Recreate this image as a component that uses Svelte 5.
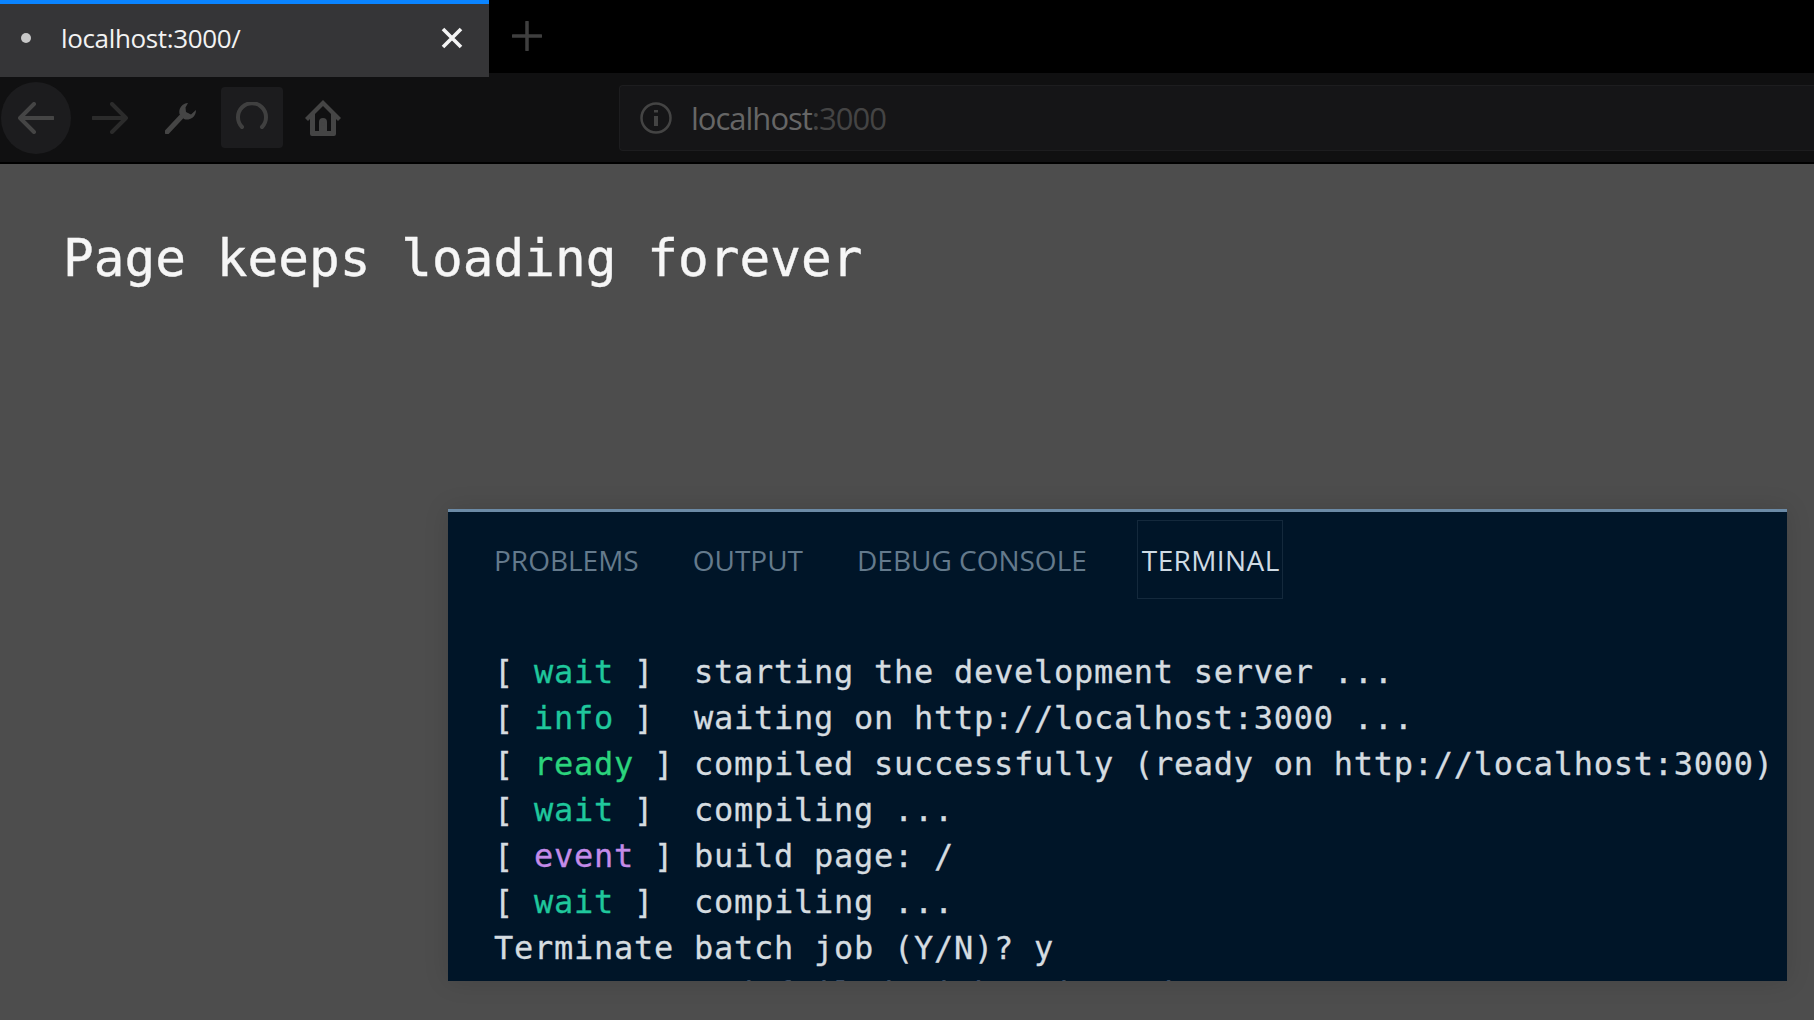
<script lang="ts">
  type Line = { tag?: string; kind?: string; pad?: string; text: string };

  const panelTabs = ["PROBLEMS", "OUTPUT", "DEBUG CONSOLE", "TERMINAL"];

  const lines: Line[] = [
    { tag: "wait", kind: "wait", pad: "  ", text: "starting the development server ..." },
    { tag: "info", kind: "wait", pad: "  ", text: "waiting on http://localhost:3000 ..." },
    { tag: "ready", kind: "ready", pad: " ", text: "compiled successfully (ready on http://localhost:3000)" },
    { tag: "wait", kind: "wait", pad: "  ", text: "compiling ..." },
    { tag: "event", kind: "event", pad: " ", text: "build page: /" },
    { tag: "wait", kind: "wait", pad: "  ", text: "compiling ..." },
    { text: "Terminate batch job (Y/N)? y" },
    { text: "error Command failed with exit code 3221225786." }
  ];
</script>

<div class="window">
  <header class="tabstrip">
    <div class="tab">
      <span class="dot"></span>
      <span class="tabtitle">localhost:3000/</span>
      <svg class="close" viewBox="0 0 22 22" width="22" height="22" aria-hidden="true">
        <path d="M2 2 L20 20 M20 2 L2 20" />
      </svg>
    </div>
    <svg class="newtab" viewBox="0 0 30 30" width="30" height="30" aria-hidden="true">
      <path d="M15 1 V29 M1 15 H29" />
    </svg>
  </header>

  <nav class="toolbar">
    <div class="btn back">
      <svg viewBox="0 0 36 32" width="36" height="32" aria-hidden="true">
        <path d="M35 16 H2 M16 2 L2 16 L16 30" />
      </svg>
    </div>
    <div class="btn forward">
      <svg viewBox="0 0 36 32" width="36" height="32" aria-hidden="true">
        <path d="M1 16 H34 M20 2 L34 16 L20 30" />
      </svg>
    </div>
    <div class="btn wrench">
      <svg viewBox="0 0 32 32" width="32" height="32" aria-hidden="true">
        <path class="wrench-handle" d="M2 30 L17 14" />
        <path class="wrench-head" d="M23 1 A9 9 0 0 0 14.500 12 L19 17 A9 9 0 0 0 31 8 L26 12.500 L21 10 L20.500 5.500 Z" />
      </svg>
    </div>
    <div class="btn reload">
      <svg viewBox="0 0 32 32" width="32" height="32" aria-hidden="true">
        <path d="M6 25 A14 14 0 1 1 26 25" />
      </svg>
    </div>
    <div class="btn home">
      <svg viewBox="0 0 36 36" width="36" height="36" aria-hidden="true">
        <path class="house" fill-rule="evenodd" d="M18 0 L36 18 L33 21 L31 19 V34 Q31 36 29 36 H7 Q5 36 5 34 V19 L3 21 L0 18 Z M18 6 L10 14 V31 H14 V22 Q14 18 18 18 Q22 18 22 22 V31 H26 V14 Z" />
        <circle class="house" cx="18" cy="24" r="2" />
      </svg>
    </div>
    <div class="address">
      <svg class="info" viewBox="0 0 32 32" width="32" height="32" aria-hidden="true">
        <circle cx="16" cy="16" r="14.500" />
        <path d="M16 14 V24 M16 8 V10.500" />
      </svg>
      <span class="host">localhost</span><span class="port">:3000</span>
    </div>
  </nav>

  <main class="page">
    <h1>Page keeps loading forever</h1>

    <section class="panel">
      <div class="panel-tabs">
        {#each panelTabs as name}
          <span class="panel-tab" class:active={name === "TERMINAL"}>{name}</span>
        {/each}
      </div>
      <div class="term">
        {#each lines as line}
          <div class="line">{#if line.tag}[ <span class={line.kind}>{line.tag}</span> ]{line.pad}{/if}{line.text}</div>
        {/each}
      </div>
    </section>
  </main>
</div>

<style>
  :global(body) {
    background: #4d4d4d;
  }
  .window {
    height: 1020px;
    overflow: hidden;
    display: flex;
    flex-direction: column;
    background: #4d4d4d;
  }

  .tabstrip {
    height: 73px;
    flex: none;
    display: flex;
    align-items: flex-start;
    background: #000;
    position: relative;
    z-index: 1;
  }
  .tab {
    width: 489px;
    height: 77px;
    box-sizing: border-box;
    border-top: 4px solid #0a84ff;
    display: flex;
    align-items: center;
    background: #353537;
    padding: 0 26px 5px 21px;
    font-family: "Open Sans", sans-serif;
    font-size: 26px;
    letter-spacing: -0.35px;
    color: #f2f2f2;
  }
  .dot {
    width: 10px;
    height: 10px;
    border-radius: 50%;
    background: #c8c8c8;
    margin-right: 30px;
  }
  .tabtitle {
    flex: 1;
  }
  .close path {
    fill: none;
    stroke: #f4f4f4;
    stroke-width: 3.600;
  }
  .newtab {
    margin: 21px 0 0 23px;
  }
  .newtab path {
    fill: none;
    stroke: #3f3f3f;
    stroke-width: 3.500;
    stroke-linecap: round;
  }

  .toolbar {
    height: 91px;
    flex: none;
    box-sizing: border-box;
    display: flex;
    align-items: center;
    padding: 0 0 0 1px;
    background: #101011;
    border-bottom: 2px solid #000;
  }
  .btn {
    display: flex;
    align-items: center;
    justify-content: center;
    flex: none;
  }
  .btn svg path {
    fill: none;
    stroke-width: 4;
    stroke-linecap: round;
    stroke-linejoin: round;
  }
  .back {
    width: 70px;
    height: 72px;
    border-radius: 50%;
    background: #1c1c1e;
  }
  .back svg path {
    stroke: #454545;
  }
  .forward {
    width: 36px;
    height: 32px;
    margin-left: 21px;
  }
  .forward svg path {
    stroke: #2b2b2b;
  }
  .wrench {
    width: 32px;
    height: 32px;
    margin-left: 37px;
  }
  .wrench svg .wrench-handle {
    stroke: #454545;
    stroke-width: 5;
  }
  .wrench svg .wrench-head {
    fill: #454545;
    stroke: none;
  }
  .reload {
    width: 62px;
    height: 61px;
    margin-left: 24px;
    border-radius: 4px;
    background: #1c1c1e;
  }
  .reload svg path {
    stroke: #404040;
  }
  .home {
    width: 36px;
    height: 36px;
    margin-left: 22px;
  }
  .home svg .house {
    fill: #454545;
    stroke: none;
  }
  .address {
    flex: 1;
    height: 66px;
    box-sizing: border-box;
    margin-left: 278px;
    display: flex;
    align-items: center;
    padding-left: 20px;
    background: #151517;
    border: 1px solid #1d1d1f;
    border-right: none;
    border-radius: 4px 0 0 4px;
    font-family: "Open Sans", sans-serif;
    font-size: 31px;
    letter-spacing: -1px;
  }
  .info {
    margin-right: 19px;
  }
  .info circle,
  .info path {
    fill: none;
    stroke: #444;
    stroke-width: 2.500;
  }
  .info path {
    stroke-width: 4;
  }
  .host {
    color: #666;
  }
  .port {
    color: #444;
  }

  .page {
    flex: 1;
    min-height: 0;
  }
  h1 {
    margin: 0;
    padding: 65px 0 0 63px;
    height: 60px;
    font-family: "DejaVu Sans Mono", monospace;
    font-weight: 400;
    font-size: 51px;
    line-height: 60px;
    letter-spacing: 0.050px;
    -webkit-text-stroke: 0.4px #f6f6f6;
    color: #f6f6f6;
  }

  .panel {
    margin: 220px 27px 0 448px;
    height: 472px;
    box-sizing: border-box;
    overflow: hidden;
    background: #001528;
    border-top: 3.500px solid #6b8aa6;
    box-shadow: 0 0 24px rgba(0, 0, 0, 0.12);
  }
  .panel-tabs {
    display: flex;
    gap: 54px;
    padding: 8px 0 0 46px;
    font-family: "Open Sans", sans-serif;
    font-size: 28px;
    color: #647a8c;
  }
  .panel-tab {
    height: 79px;
    box-sizing: border-box;
    line-height: 81px;
    white-space: nowrap;
  }
  .panel-tab.active {
    color: #cfdbe4;
    margin-left: -4px;
    padding: 0 2px 0 4px;
    border: 1px solid #14293c;
    line-height: 79px;
    letter-spacing: 0.4px;
  }
  .term {
    padding: 50px 0 0 46px;
    font-family: "DejaVu Sans Mono", monospace;
    font-size: 32px;
    line-height: 46px;
    letter-spacing: 0.730px;
    -webkit-text-stroke: 0.3px;
    color: #d5dce0;
  }
  .line {
    white-space: pre;
  }
  .wait {
    color: #1fc79c;
  }
  .ready {
    color: #2bd47d;
  }
  .event {
    color: #c48be8;
  }
</style>
